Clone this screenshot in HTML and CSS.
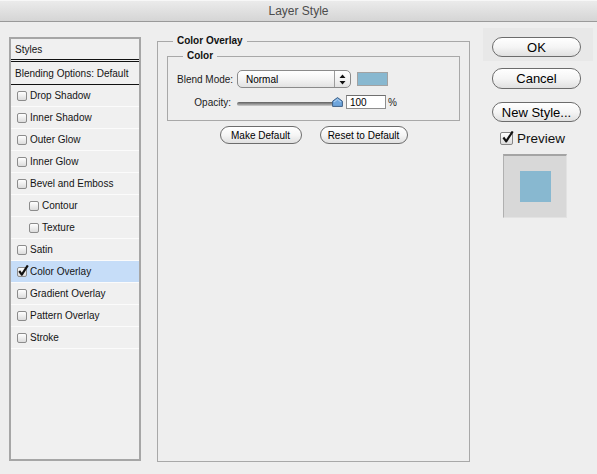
FILE: index.html
```html
<!DOCTYPE html>
<html>
<head>
<meta charset="utf-8">
<title>Layer Style</title>
<link rel="stylesheet" href="styles.css">
</head>
<body>
<div class="titlebar">Layer Style</div>
<div class="main">
  <div class="styles-list">
    <div class="row head">Styles</div>
    <div class="row blend">Blending Options: Default</div>
    <div class="row item"><span class="cb"></span>Drop Shadow</div>
    <div class="row item"><span class="cb"></span>Inner Shadow</div>
    <div class="row item"><span class="cb"></span>Outer Glow</div>
    <div class="row item"><span class="cb"></span>Inner Glow</div>
    <div class="row item"><span class="cb"></span>Bevel and Emboss</div>
    <div class="row item sub"><span class="cb"></span>Contour</div>
    <div class="row item sub"><span class="cb"></span>Texture</div>
    <div class="row item"><span class="cb"></span>Satin</div>
    <div class="row item selected"><span class="cb"><svg class="check" viewBox="0 0 12 12" width="12" height="12"><path d="M2.2 6 L4.8 9.6 L10.8 0.4" fill="none" stroke="#111" stroke-width="2.2" stroke-linejoin="round"/></svg></span>Color Overlay</div>
    <div class="row item"><span class="cb"></span>Gradient Overlay</div>
    <div class="row item"><span class="cb"></span>Pattern Overlay</div>
    <div class="row item"><span class="cb"></span>Stroke</div>
  </div>

  <fieldset class="panel">
    <legend>Color Overlay</legend>
    <fieldset class="group">
      <legend>Color</legend>
      <div class="field first">
        <span class="label">Blend Mode:</span>
        <div class="select">
          <span class="select-text">Normal</span>
          <span class="stepper"><svg viewBox="0 0 7 11" width="7" height="11"><path d="M3.5 0.5 L6.5 4 L0.5 4 Z M3.5 10.5 L6.5 7 L0.5 7 Z" fill="#111"/></svg></span>
        </div>
        <span class="swatch"></span>
      </div>
      <div class="field second">
        <span class="label">Opacity:</span>
        <div class="slider">
          <span class="track"></span>
          <svg class="thumb" viewBox="0 0 11 10" width="11" height="10"><path d="M5.5 0.6 L10.4 4.2 L10.4 9.4 L0.6 9.4 L0.6 4.2 Z" fill="#6ea5dc" stroke="#3d5f86" stroke-width="1"/><path d="M2 5 L5.5 2.3 L9 5" fill="none" stroke="#b8d6f4" stroke-width="1"/></svg>
        </div>
        <input class="num" type="text" value="100">
        <span class="pct">%</span>
      </div>
    </fieldset>
    <div class="btnrow">
      <button class="pill make">Make Default</button>
      <button class="pill reset">Reset to Default</button>
    </div>
  </fieldset>

  <div class="side">
    <div class="ok-wrap"><button class="pill big">OK</button></div>
    <button class="pill big cancel">Cancel</button>
    <button class="pill big newstyle">New Style...</button>
    <div class="preview-row">
      <span class="cb big-cb"><svg class="check" viewBox="0 0 12 12" width="13" height="13"><path d="M2.2 6 L4.8 9.6 L10.8 0.4" fill="none" stroke="#111" stroke-width="2" stroke-linejoin="round"/></svg></span>
      <span class="preview-label">Preview</span>
    </div>
    <div class="preview-box"><span class="preview-swatch"></span></div>
  </div>
</div>
</body>
</html>
```

FILE: styles.css
```css
html, body {
  margin: 0;
  padding: 0;
}
body {
  width: 597px;
  height: 474px;
  overflow: hidden;
  background: #eeeeee;
  font-family: "Liberation Sans", Arial, sans-serif;
  font-size: 10px;
  color: #000;
}

.titlebar {
  height: 21px;
  border-bottom: 1px solid #9a9a9a;
  background: linear-gradient(#ececec, #d5d5d5);
  box-shadow: inset 0 1px 0 #f7f7f7;
  text-align: center;
  font-size: 12px;
  line-height: 22px;
  color: #4c4c4c;
}

.main {
  display: flex;
  align-items: flex-start;
  padding: 13px 0 0 9px;
}

/* left list */
.styles-list {
  margin-top: 2px;
  width: 128px;
  height: 420px;
  border: 2px solid #a6a6a6;
  background: #f0f0f0;
}
.row {
  display: flex;
  align-items: center;
  height: 21px;
  padding-left: 6px;
  border-bottom: 1px solid #fbfbfb;
  color: #141414;
  white-space: nowrap;
}
.row.head {
  height: 20px;
  padding-left: 4px;
  border-bottom: 3px double #111;
}
.row.blend {
  height: 22px;
  padding-left: 4px;
  border-bottom: 1px solid #111;
}
.row.sub {
  padding-left: 18px;
}
.row.selected {
  background: #c6ddf8;
}
.cb {
  position: relative;
  flex: none;
  box-sizing: border-box;
  width: 10px;
  height: 10px;
  margin-right: 3px;
  border: 1px solid #8c8c8c;
  border-radius: 2px;
  background: linear-gradient(#ffffff, #dcdcdc);
}
.cb .check {
  position: absolute;
  left: -1px;
  top: -3px;
}

/* center panel */
.panel {
  box-sizing: border-box;
  margin: 0 0 0 16px;
  width: 313px;
  height: 427px;
  padding: 0 9px;
  border: 1px solid #a8a8a8;
  min-inline-size: 0;
}
legend {
  margin-left: 6px;
  padding: 0 4px;
  font-weight: bold;
  line-height: 12px;
  color: #111;
}
.group {
  margin: 3px 0 0;
  padding: 0 9px 11px;
  border: 1px solid #a8a8a8;
  min-inline-size: 0;
}
.field {
  display: flex;
  align-items: center;
  white-space: nowrap;
}
.field.first {
  margin-top: 8px;
  height: 18px;
}
.field.second {
  margin-top: 7px;
  height: 14px;
}
.label {
  flex: none;
  width: 54px;
  margin-right: 6px;
  text-align: right;
  color: #1a1a1a;
  white-space: nowrap;
}
.select {
  box-sizing: border-box;
  display: flex;
  align-items: center;
  flex: none;
  width: 114px;
  height: 18px;
  border: 1px solid #8a8a8a;
  border-radius: 5px;
  background: linear-gradient(#ffffff, #f4f4f4 50%, #e2e2e2);
}
.select-text {
  flex: 1;
  padding-left: 8px;
}
.stepper {
  display: flex;
  align-items: center;
  justify-content: center;
  width: 15px;
  height: 16px;
  border-left: 1px solid #9c9c9c;
}
.swatch {
  box-sizing: border-box;
  flex: none;
  margin-left: 6px;
  width: 31px;
  height: 14px;
  border: 1px solid #a2a2a2;
  background: #88b8d0;
}
.slider {
  display: flex;
  align-items: flex-end;
  flex: none;
  width: 106px;
  height: 10px;
}
.track {
  width: 100px;
  height: 4px;
  margin-bottom: 1px;
  border-radius: 2px;
  background: linear-gradient(#5e5e5e, #9d9d9d 60%, #d0d0d0);
}
.thumb {
  margin-left: -5px;
  flex: none;
}
.num {
  box-sizing: border-box;
  flex: none;
  margin: 0 0 0 3px;
  width: 40px;
  height: 14px;
  padding: 0 3px;
  border: 1px solid #8e8e8e;
  border-top-color: #6f6f6f;
  background: #fff;
  font-family: "Liberation Sans", Arial, sans-serif;
  font-size: 10px;
  color: #000;
  outline: none;
}
.pct {
  margin-left: 2px;
  color: #222;
}

.btnrow {
  display: flex;
  justify-content: center;
  gap: 18px;
  margin-top: 5px;
}
.pill {
  box-sizing: border-box;
  height: 18px;
  padding: 0;
  border: 1px solid #6c6c6c;
  border-radius: 9px;
  background: linear-gradient(#ffffff, #f5f5f5 50%, #e0e0e0);
  font-family: "Liberation Sans", Arial, sans-serif;
  font-size: 10px;
  color: #000;
}
.pill.make { width: 82px; }
.pill.reset { width: 88px; }

/* right side */
.side {
  display: flex;
  flex-direction: column;
  margin: -7px 0 0 13px;
  width: 110px;
}
.ok-wrap {
  height: 33px;
  background: #e8e8e8;
  display: flex;
  flex-direction: column;
}
.pill.big {
  width: 89px;
  height: 20px;
  margin-left: 9px;
  border-radius: 10px;
  font-size: 13px;
}
.ok-wrap .pill.big {
  margin-top: 9px;
}
.pill.cancel { margin-top: 7px; height: 21px; }
.pill.newstyle { margin-top: 13px; }
.preview-row {
  display: flex;
  align-items: center;
  margin: 9px 0 0 17px;
  height: 14px;
}
.cb.big-cb {
  width: 13px;
  height: 13px;
  margin-right: 4px;
  border-color: #858585;
}
.cb.big-cb .check {
  left: 0;
  top: -2px;
}
.preview-label {
  font-size: 13.5px;
  color: #111;
}
.preview-box {
  box-sizing: border-box;
  display: flex;
  align-items: center;
  justify-content: center;
  margin: 9px 0 0 20px;
  width: 64px;
  height: 64px;
  border-top: 2px solid #a4a4a4;
  border-left: 1px solid #b0b0b0;
  border-right: 1px solid #e2e2e2;
  border-bottom: 1px solid #e2e2e2;
  background: #d8d8d8;
}
.preview-swatch {
  width: 31px;
  height: 31px;
  background: #88b8d0;
}
```
